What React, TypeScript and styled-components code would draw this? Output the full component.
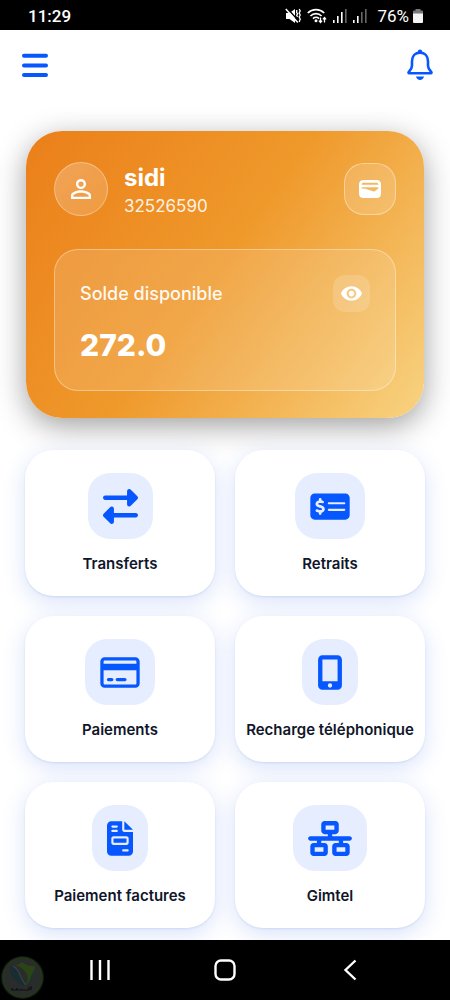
import React from 'react';
import styled, { createGlobalStyle } from 'styled-components';
import {
  FaRightLeft,
  FaMoneyCheckDollar,
  FaRegCreditCard,
  FaMobileScreenButton,
  FaFileInvoice,
  FaNetworkWired,
} from 'react-icons/fa6';
import { MdPersonOutline, MdVisibility } from 'react-icons/md';
import type { IconType } from 'react-icons';

const BLUE = '#0757ff';

const GlobalStyle = createGlobalStyle`
  *, *::before, *::after { box-sizing: border-box; }
  body {
    margin: 0;
    background: #fff;
    font-family: Inter, 'Liberation Sans', sans-serif;
  }
  button { font: inherit; color: inherit; border: 0; padding: 0; background: none; cursor: pointer; }
  svg { display: block; }
`;

const Page = styled.div`
  min-height: 100vh;
  display: flex;
  flex-direction: column;
`;

const StatusBar = styled.div`
  height: 30px;
  padding: 2px 26px 0 28px;
  display: flex;
  align-items: center;
  justify-content: space-between;
  background: #000;
  color: #fff;
  font: 500 17px/20px Roboto, sans-serif;
`;

const StatusIcons = styled.div`
  display: flex;
  align-items: center;
  gap: 6px;
`;

const Battery = styled.span`
  display: flex;
  align-items: center;
  gap: 3px;
  margin-left: 4px;
  font-weight: 400;
`;

const Header = styled.header`
  height: 70px;
  padding: 0 16px 0 21px;
  display: flex;
  align-items: center;
  justify-content: space-between;
  color: ${BLUE};
`;

const Main = styled.main`
  padding: 31px 25px 12px;
  display: flex;
  flex-direction: column;
  gap: 32px;
`;

const BalanceCard = styled.section`
  margin: 0 1px;
  padding: 31px 28px 27px;
  border-radius: 36px;
  background: linear-gradient(126deg, #eb7f19 0%, #ef992b 48%, #f8d382 100%);
  box-shadow: 0 8px 30px rgba(0, 0, 0, 0.38);
  color: #fff;
`;

const Profile = styled.div`
  display: flex;
  align-items: center;
  gap: 16px;
  margin-bottom: 33px;
`;

const Avatar = styled.div`
  width: 54px;
  height: 54px;
  display: grid;
  place-items: center;
  border-radius: 50%;
  border: 1px solid rgba(255, 255, 255, 0.34);
  background: linear-gradient(135deg, rgba(255, 255, 255, 0.26), rgba(255, 255, 255, 0.14));
`;

const Identity = styled.div`
  flex: 1;
`;

const Name = styled.h1`
  margin: 0;
  font-size: 24px;
  line-height: 32px;
  font-weight: 700;
`;

const Account = styled.p`
  margin: 2px 0 0;
  font-size: 17px;
  line-height: 20px;
  color: rgba(255, 255, 255, 0.9);
`;

const WalletButton = styled.button`
  width: 52px;
  height: 52px;
  display: grid;
  place-items: center;
  border-radius: 20px;
  border: 1px solid rgba(255, 255, 255, 0.38);
  background: rgba(255, 255, 255, 0.16);
`;

const Balance = styled.div`
  padding: 25px;
  border-radius: 24px;
  border: 1px solid rgba(255, 255, 255, 0.36);
  background: linear-gradient(135deg, rgba(255, 255, 255, 0.15), rgba(255, 255, 255, 0.12));
`;

const BalanceTop = styled.div`
  display: flex;
  align-items: center;
  justify-content: space-between;
`;

const BalanceLabel = styled.h2`
  margin: 0;
  font-size: 18px;
  line-height: 24px;
  font-weight: 500;
  color: rgba(255, 255, 255, 0.94);
`;

const EyeButton = styled.button`
  width: 37px;
  height: 37px;
  display: grid;
  place-items: center;
  border-radius: 12px;
  background: rgba(255, 255, 255, 0.16);
`;

const Amount = styled.p`
  margin: 13px 0 0;
  font-size: 30px;
  line-height: 40px;
  font-weight: 800;
`;

const Services = styled.nav`
  position: relative;
  display: grid;
  grid-template-columns: 1fr 1fr;
  gap: 20px;
`;

const Tile = styled.button`
  height: 146px;
  padding: 23px 4px 0;
  display: flex;
  flex-direction: column;
  align-items: center;
  gap: 15px;
  border-radius: 28px;
  background: #fff;
  box-shadow: 0 6px 22px rgba(40, 95, 225, 0.18), 0 1px 2px rgba(40, 80, 180, 0.12);
`;

const Chip = styled.span<{ $iconWidth: number }>`
  height: 66px;
  padding: 0 15px;
  display: flex;
  align-items: center;
  border-radius: 22px;
  background: #e6edfe;
  color: ${BLUE};

  svg {
    width: ${({ $iconWidth }) => $iconWidth}px;
    height: 35px;
  }
`;

const TileLabel = styled.span`
  font-size: 15px;
  line-height: 20px;
  font-weight: 600;
  color: #10162a;
  white-space: nowrap;
`;

const SystemNav = styled.nav`
  position: relative;
  height: 60px;
  margin-top: auto;
  padding: 0 37px;
  display: grid;
  grid-template-columns: repeat(3, 1fr);
  background: #000;
  color: #fff;
`;

const NavButton = styled.button`
  display: grid;
  place-items: center;
`;

const Watermark = styled.svg`
  position: absolute;
  left: 0;
  bottom: 0;
`;

const services: { label: string; icon: IconType; iconWidth: number }[] = [
  { label: 'Transferts', icon: FaRightLeft, iconWidth: 35 },
  { label: 'Retraits', icon: FaMoneyCheckDollar, iconWidth: 40 },
  { label: 'Paiements', icon: FaRegCreditCard, iconWidth: 40 },
  { label: 'Recharge téléphonique', icon: FaMobileScreenButton, iconWidth: 26 },
  { label: 'Paiement factures', icon: FaFileInvoice, iconWidth: 26 },
  { label: 'Gimtel', icon: FaNetworkWired, iconWidth: 44 },
];

function MuteIcon() {
  return (
    <svg width="16" height="16" viewBox="0 0 16 16" fill="#fff" aria-hidden="true">
      <path d="M1 5h3.500L10 1v14L4.500 11H1z" />
      <path d="M2.200 .2l12 13.500" stroke="#000" strokeWidth="1.500" />
      <path d="M.8 1l12 13.500" stroke="#fff" strokeWidth="1.500" />
      <path d="M11.700 2v2.500l.9 1.300-.9 1.500.9 1.500M14.200 1l1 2-1 2 1 2-1 2 1 2-1 3" fill="none" stroke="#fff" strokeWidth="1.300" />
    </svg>
  );
}

function WifiIcon() {
  return (
    <svg width="20" height="16" viewBox="0 0 20 16" fill="none" stroke="#fff" strokeWidth="1.700" aria-hidden="true">
      <path d="M.8 5a11.800 11.800 0 0 1 16.400 0M3.400 8a8 8 0 0 1 11.200 0M6 10.600a4.400 4.400 0 0 1 6 0" />
      <circle cx="9" cy="12.800" r="1.500" fill="#fff" stroke="none" />
      <path d="M13.500 9.500v5M11.900 12.600l1.600 1.900 1.600-1.900M17.500 14.500v-5M15.900 11.300l1.600-1.900 1.600 1.900" strokeWidth="1.300" />
    </svg>
  );
}

function SignalIcon({ level }: { level: number }) {
  return (
    <svg width="14" height="16" viewBox="0 0 14 16" aria-hidden="true">
      {[3, 7, 11, 14].map((h, i) => (
        <rect key={h} x={i * 4} y={15 - h} width="1.600" height={h} fill={i < level ? '#fff' : '#666'} />
      ))}
    </svg>
  );
}

function MenuIcon() {
  return (
    <svg width="28" height="24" viewBox="0 0 28 24" stroke="currentColor" strokeWidth="4" strokeLinecap="round" aria-hidden="true">
      <path d="M3 2.800h22M3 12.500h22M3 22h22" />
    </svg>
  );
}

function BellIcon() {
  return (
    <svg width="28" height="32" viewBox="0 0 28 32" fill="none" stroke="currentColor" strokeWidth="2.600" strokeLinejoin="round" strokeLinecap="round" aria-hidden="true">
      <path d="M14 3.600c-5 0-8 3.600-8 8.600v4.600c0 2.400-1.200 4.200-3.200 6.200-.6.600-.3 1.300.4 1.300h21.600c.7 0 1-.7.4-1.300-2-2-3.200-3.800-3.200-6.200v-4.600c0-5-3-8.600-8-8.600z" />
      <circle cx="14" cy="2.800" r="2.200" fill="currentColor" stroke="none" />
      <path d="M10 27.600h8c-.5 2.200-2 3.400-4 3.400s-3.500-1.200-4-3.400z" fill="currentColor" stroke="none" />
    </svg>
  );
}

function WalletIcon() {
  return (
    <svg width="22" height="18" viewBox="0 0 22 18" fill="currentColor" fillRule="evenodd" aria-hidden="true">
      <path d="M4.500 0h13Q22 0 22 4.500v9q0 4.500-4.500 4.500h-13Q0 18 0 13.500v-9Q0 0 4.500 0zM4 2.800q-1 .1-1.300 1.400v.5h16.600v-.5Q19 2.900 18 2.800zM2.700 7.300v1.200l4 .2q1 .1 1.800.7l5.500 1.800q1.400.5 2.500-.4l2.800-2.300V7.300z" />
    </svg>
  );
}

export default function App() {
  return (
    <>
      <GlobalStyle />
      <Page>
        <StatusBar>
          <span>11:29</span>
          <StatusIcons>
            <MuteIcon />
            <WifiIcon />
            <SignalIcon level={3} />
            <SignalIcon level={2} />
            <Battery>
              76%
              <svg width="12" height="16" viewBox="0 0 12 16" aria-hidden="true">
                <path d="M3.500 1h5v1.500H10q1 0 1 1V6H1V3.500q0-1 1-1h1.500z" fill="#777" />
                <path d="M1 5.500h10V14q0 1-1 1H2q-1 0-1-1z" fill="#f4f4f4" />
              </svg>
            </Battery>
          </StatusIcons>
        </StatusBar>

        <Header>
          <button aria-label="Menu"><MenuIcon /></button>
          <button aria-label="Notifications"><BellIcon /></button>
        </Header>

        <Main>
          <BalanceCard>
            <Profile>
              <Avatar><MdPersonOutline size={30} /></Avatar>
              <Identity>
                <Name>sidi</Name>
                <Account>32526590</Account>
              </Identity>
              <WalletButton aria-label="Portefeuille"><WalletIcon /></WalletButton>
            </Profile>
            <Balance>
              <BalanceTop>
                <BalanceLabel>Solde disponible</BalanceLabel>
                <EyeButton aria-label="Afficher le solde"><MdVisibility size={23} /></EyeButton>
              </BalanceTop>
              <Amount>272.0</Amount>
            </Balance>
          </BalanceCard>

          <Services aria-label="Services">
            {services.map(({ label, icon: Icon, iconWidth }) => (
              <Tile key={label}>
                <Chip $iconWidth={iconWidth}><Icon /></Chip>
                <TileLabel>{label}</TileLabel>
              </Tile>
            ))}
          </Services>
        </Main>

        <SystemNav aria-label="Navigation système">
          <NavButton aria-label="Applications récentes">
            <svg width="20" height="22" viewBox="0 0 20 22" stroke="currentColor" strokeWidth="2.400" aria-hidden="true">
              <path d="M1.500 1v20M10 1v20M18.500 1v20" />
            </svg>
          </NavButton>
          <NavButton aria-label="Accueil">
            <svg width="22" height="22" viewBox="0 0 22 22" fill="none" stroke="currentColor" strokeWidth="2.400" aria-hidden="true">
              <rect x="1.500" y="1.500" width="19" height="19" rx="5.500" />
            </svg>
          </NavButton>
          <NavButton aria-label="Retour">
            <svg width="14" height="22" viewBox="0 0 14 22" fill="none" stroke="currentColor" strokeWidth="2.400" aria-hidden="true">
              <path d="M12.500 1.500L2.500 11l10 9.500" />
            </svg>
          </NavButton>
          <Watermark width="46" height="46" viewBox="0 0 46 46" aria-hidden="true">
            <circle cx="22.500" cy="23.500" r="21.500" fill="#0f1a1e" />
            <circle cx="22.500" cy="23.500" r="19.500" fill="#292c2b" stroke="#25380f" strokeWidth="1.500" />
            <path d="M16 11q4-1 6-3 5 4 13 4.500Q36 25 24 32q5-5 3-11-3-7-11-10z" fill="#2a4416" />
            <path d="M10 12q6 1 9 8t6 12Q10 27 10 12z" fill="#172c33" />
            <path d="M13 12q4 2 7 9t6 10" fill="none" stroke="#3a403e" strokeWidth="1.300" />
            <path d="M35 14q0 13-10 18.500 5-5 6-10z" fill="#1b3230" />
            <path d="M12 34v2h5v-2m0 2h4v-1m0 1h8v-3m2 3v-4" fill="none" stroke="#0d100f" strokeWidth="1.200" />
          </Watermark>
        </SystemNav>
      </Page>
    </>
  );
}
